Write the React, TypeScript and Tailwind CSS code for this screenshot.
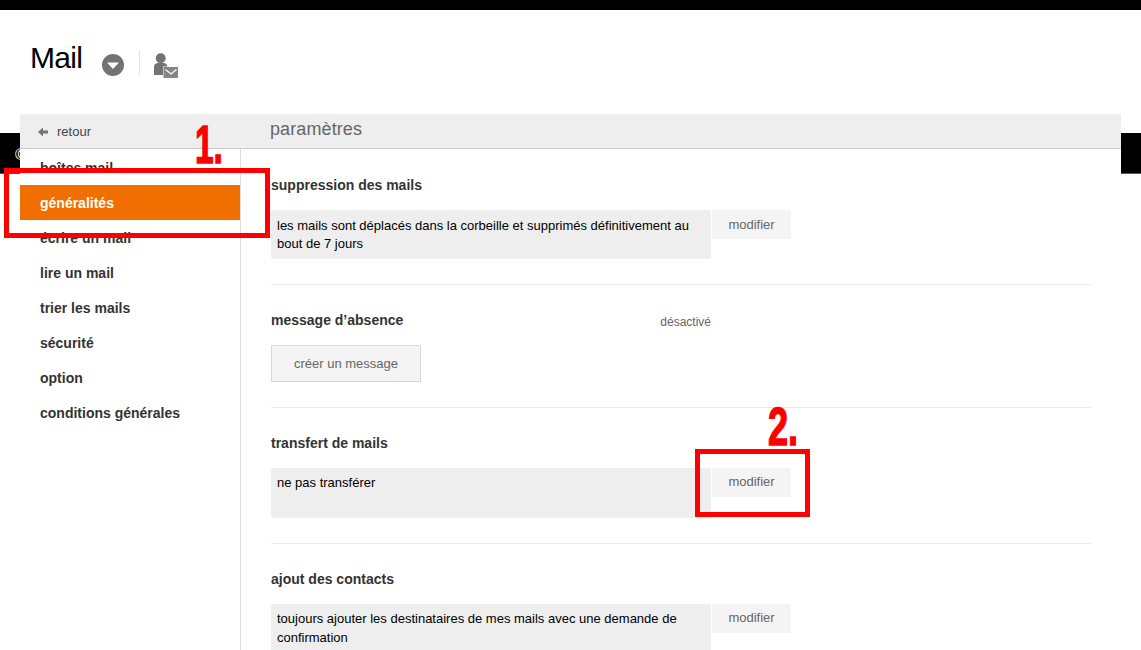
import React from "react";

const font = { fontFamily: '"Liberation Sans", Arial, sans-serif' };

function Row({ text, h, pt = "pt-[6px]", btnPad = "pb-px", btn = "modifier" }: { text: React.ReactNode; h: string; pt?: string; btnPad?: string; btn?: string }) {
  return (
    <div className="flex items-start gap-px shrink-0">
      <div className={`w-[440px] ${h} ${pt} shrink-0 bg-[#eeeeee] rounded-[3px] px-[6px] text-[13px] leading-[18.57px] text-black`}>{text}</div>
      <div className={`w-[79px] h-[29px] ${btnPad} bg-[#f4f4f4] flex items-center justify-center text-[13px] text-[#666666]`}>{btn}</div>
    </div>
  );
}

function Title({ children }: { children: React.ReactNode }) {
  return <div className="h-[16px] shrink-0 text-[14px] leading-[16px] font-bold text-[#333333]">{children}</div>;
}

const Hr = ({ className }: { className: string }) => <div className={`w-[820px] h-px shrink-0 bg-[#e8e8e8] ${className}`} />;

const nav = ["boîtes mail", "généralités", "écrire un mail", "lire un mail", "trier les mails", "sécurité", "option", "conditions générales"];

export default function App() {
  return (
    <div style={font} className="relative w-[1141px] h-[650px] overflow-hidden bg-white">
      <div className="absolute left-0 top-[133px] w-[1141px] h-[41px] bg-black border-b border-[#555555] text-white text-[16px] pl-[15px] pt-[10px]">©</div>
      <div className="relative h-[650px] flex flex-col">
        <div className="h-[10px] bg-black shrink-0" />
        <div className="h-[104px] shrink-0 flex items-start pl-[30px]">
          <div className="w-[52px] text-[30px] leading-[37px] tracking-[-0.7px] text-black mt-[29px]">Mail</div>
          <svg className="ml-[20px] mt-[44px]" width="22" height="22" viewBox="0 0 22 22">
            <circle cx="11" cy="11" r="11" fill="#737373" />
            <path d="M5 8.500h12l-6 6.500z" fill="#fff" />
          </svg>
          <div className="ml-[15px] mt-[40px] w-px h-[25px] bg-[#e3e3e3]" />
          <svg className="ml-[14px] mt-[43px]" width="24" height="25" viewBox="0 0 24 25">
            <circle cx="6.700" cy="5.200" r="5" fill="#737373" />
            <path d="M0 22v-8c0-3 2-4 4-4h5.500c2 0 3.500 1 4 3.500h-4.500v8.500z" fill="#737373" />
            <path d="M9.500 14h14.500v11h-14.500z" fill="#858585" />
            <path d="M11.500 16.500l5.500 4.500 5.500-4.500" fill="none" stroke="#fff" strokeWidth="1.200" />
          </svg>
        </div>
        <div className="ml-[20px] w-[1101px] flex-1 bg-white flex flex-col min-h-0">
          <div className="h-[35px] shrink-0 bg-[#eeeeee] border-b border-[#cccccc] flex items-center">
            <div className="w-[250px] flex items-center pl-[18px] text-[13px] text-[#444444] pt-[2px]">
              <svg width="10" height="10" viewBox="0 0 10 10" className="mr-[9px]">
                <path d="M0 5l5-4.500v3h5v3h-5v3z" fill="#737373" />
              </svg>
              retour
            </div>
            <div className="text-[18px] tracking-[0.1px] text-[#666666] -mt-[3px]">paramètres</div>
          </div>
          <div className="flex flex-1 min-h-0">
            <div className="w-[221px] shrink-0 border-r border-[#dddddd] pt-px">
              {nav.map((n, i) => (
                <div
                  key={n}
                  className={`h-[35px] w-[220px] pl-[20px] pt-px flex items-center text-[14px] font-bold ${i === 1 ? "bg-[#f16e00] text-white" : "text-[#333333]"}`}
                >
                  {n}
                </div>
              ))}
            </div>
            <div className="pl-[30px] pt-[28px] flex flex-col">
              <Title>suppression des mails</Title>
              <div className="mt-[17px] shrink-0">
                <Row
                  h="h-[49px]"
                  pt="pt-[6.5px]"
                  btnPad=""
                  text={<>les mails sont déplacés dans la corbeille et supprimés définitivement au bout de 7 jours</>}
                />
              </div>
              <Hr className="mt-[25px]" />
              <div className="mt-[27px] h-[16px] shrink-0 w-[440px] flex justify-between items-start">
                <Title>message d’absence</Title>
                <span className="text-[12px] leading-[14px] text-[#666666] mt-[3px]">désactivé</span>
              </div>
              <div className="mt-[17px] w-[150px] h-[37px] shrink-0 bg-[#f4f4f4] border border-[#d8d8d8] flex items-center justify-center text-[13px] text-[#666666]">
                créer un message
              </div>
              <Hr className="mt-[25px]" />
              <div className="mt-[27px] shrink-0"><Title>transfert de mails</Title></div>
              <div className="mt-[17px] shrink-0"><Row h="h-[50px]" text="ne pas transférer" /></div>
              <Hr className="mt-[25px]" />
              <div className="mt-[27px] shrink-0"><Title>ajout des contacts</Title></div>
              <div className="mt-[17px] shrink-0">
                <Row h="h-[50px]" text="toujours ajouter les destinataires de mes mails avec une demande de confirmation" />
              </div>
            </div>
          </div>
        </div>
      </div>
      <div className="absolute left-[4px] top-[168px] w-[266px] h-[70px] border-[5px] border-[#ff0000]" />
      <div className="absolute left-[695px] top-[449px] w-[115px] h-[68px] border-[5px] border-[#ff0000]" />
      <div className="absolute left-[195px] top-[114px] text-[#ff0000] text-[54px] leading-[60px] font-bold scale-x-[0.62] origin-left" style={{ WebkitTextStroke: "1.5px #ff0000" }}>1.</div>
      <div className="absolute left-[768px] top-[396px] text-[#ff0000] text-[54px] leading-[60px] font-bold scale-x-[0.67] origin-left" style={{ WebkitTextStroke: "1.5px #ff0000" }}>2.</div>
    </div>
  );
}
